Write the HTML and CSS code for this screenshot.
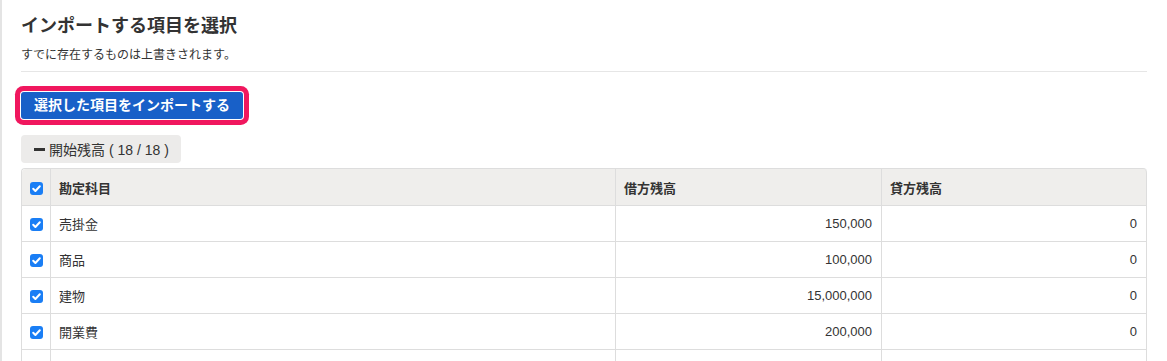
FILE: index.html
```html
<!DOCTYPE html>
<html lang="ja">
<head>
<meta charset="utf-8">
<link rel="stylesheet" href="styles.css">
</head>
<body>
<div class="page">
  <h1 class="title">インポートする項目を選択</h1>
  <p class="subtitle">すでに存在するものは上書きされます。</p>
  <hr class="rule">
  <div class="actions">
    <button class="btn-import">選択した項目をインポートする</button>
  </div>
  <div class="group">
    <button class="chip"><span class="minus"></span>開始残高 ( 18 / 18 )</button>
  </div>
  <table class="grid">
    <thead>
      <tr>
        <th class="c-check"><span class="cb"><svg viewBox="0 0 13 13"><path d="M3.2 6.8 L5.4 9 L9.8 4.2" fill="none" stroke="#fff" stroke-width="2" stroke-linecap="round" stroke-linejoin="round"/></svg></span></th>
        <th class="c-name">勘定科目</th>
        <th class="c-num">借方残高</th>
        <th class="c-num">貸方残高</th>
      </tr>
    </thead>
    <tbody>
      <tr>
        <td class="c-check"><span class="cb"><svg viewBox="0 0 13 13"><path d="M3.2 6.8 L5.4 9 L9.8 4.2" fill="none" stroke="#fff" stroke-width="2" stroke-linecap="round" stroke-linejoin="round"/></svg></span></td>
        <td class="c-name">売掛金</td>
        <td class="c-num">150,000</td>
        <td class="c-num">0</td>
      </tr>
      <tr>
        <td class="c-check"><span class="cb"><svg viewBox="0 0 13 13"><path d="M3.2 6.8 L5.4 9 L9.8 4.2" fill="none" stroke="#fff" stroke-width="2" stroke-linecap="round" stroke-linejoin="round"/></svg></span></td>
        <td class="c-name">商品</td>
        <td class="c-num">100,000</td>
        <td class="c-num">0</td>
      </tr>
      <tr>
        <td class="c-check"><span class="cb"><svg viewBox="0 0 13 13"><path d="M3.2 6.8 L5.4 9 L9.8 4.2" fill="none" stroke="#fff" stroke-width="2" stroke-linecap="round" stroke-linejoin="round"/></svg></span></td>
        <td class="c-name">建物</td>
        <td class="c-num">15,000,000</td>
        <td class="c-num">0</td>
      </tr>
      <tr>
        <td class="c-check"><span class="cb"><svg viewBox="0 0 13 13"><path d="M3.2 6.8 L5.4 9 L9.8 4.2" fill="none" stroke="#fff" stroke-width="2" stroke-linecap="round" stroke-linejoin="round"/></svg></span></td>
        <td class="c-name">開業費</td>
        <td class="c-num">200,000</td>
        <td class="c-num">0</td>
      </tr>
      <tr>
        <td class="c-check"></td>
        <td class="c-name"></td>
        <td class="c-num"></td>
        <td class="c-num"></td>
      </tr>
    </tbody>
  </table>
</div>
</body>
</html>
```
FILE: styles.css
```css
html, body {
  margin: 0;
  padding: 0;
  background: #fff;
  overflow: hidden;
}
body {
  font-family: "Liberation Sans", "Noto Sans CJK JP", sans-serif;
  color: #333;
}
.page {
  border-left: 2px solid #e4e4e4;
  padding: 14px 20px 0 19px;
  min-height: 361px;
  box-sizing: border-box;
}
.title {
  margin: 0;
  font-size: 18px;
  line-height: 24px;
  font-weight: bold;
  color: #333;
}
.subtitle {
  margin: 8px 0 0;
  font-size: 12px;
  line-height: 18px;
  color: #333;
}
.rule {
  margin: 7px 0 0;
  border: 0;
  border-top: 1px solid #e6e6e6;
  height: 0;
}
.actions {
  margin-top: 20px;
  display: flex;
}
.btn-import {
  font-family: inherit;
  font-size: 14px;
  font-weight: bold;
  color: #fff;
  background: #1860c8;
  border: 0;
  border-radius: 3px;
  height: 27px;
  padding: 0 13px;
  line-height: 27px;
  box-shadow: 0 0 0 1px #fff, 0 0 0 6px #f0175e;
  cursor: pointer;
}
.group {
  margin-top: 16px;
  display: flex;
}
.chip {
  font-family: inherit;
  font-size: 14px;
  color: #333;
  background: #ecebea;
  border: 0;
  border-radius: 4px;
  height: 28px;
  padding: 0 12px 0 13px;
  display: flex;
  align-items: center;
  gap: 4px;
}
.minus {
  display: inline-block;
  width: 11px;
  height: 3px;
  background: #333;
}
.grid {
  margin-top: 5px;
  width: 100%;
  border-collapse: separate;
  border-spacing: 0;
  border-top: 1px solid #dddddd;
  border-left: 1px solid #dddddd;
  border-radius: 4px 4px 0 0;
  font-size: 13px;
  table-layout: fixed;
}
.grid th, .grid td {
  border-right: 1px solid #dddddd;
  border-bottom: 1px solid #dddddd;
  padding: 0 9px 0 8px;
  text-align: left;
  vertical-align: middle;
}
.grid thead th {
  background: #efeeec;
  font-weight: bold;
  height: 36px;
}
.grid thead th:first-child { border-top-left-radius: 4px; }
.grid thead th:last-child { border-top-right-radius: 4px; }
.grid tbody td {
  height: 35px;
}
.grid .c-check {
  width: 29px;
  padding: 0;
  text-align: center;
  box-sizing: border-box;
}
.grid th.c-check { width: 29px; }
.grid .c-num {
  text-align: right;
}
.grid thead th.c-num {
  text-align: left;
}
.grid th:nth-child(2) { width: 565px; box-sizing: border-box; }
.grid th:nth-child(3) { width: 266px; box-sizing: border-box; }
.cb {
  display: inline-block;
  width: 13px;
  height: 13px;
  background: #1a7ef5;
  border-radius: 3px;
  vertical-align: middle;
  margin-left: 1px;
}
.cb svg {
  display: block;
  width: 13px;
  height: 13px;
}
```
